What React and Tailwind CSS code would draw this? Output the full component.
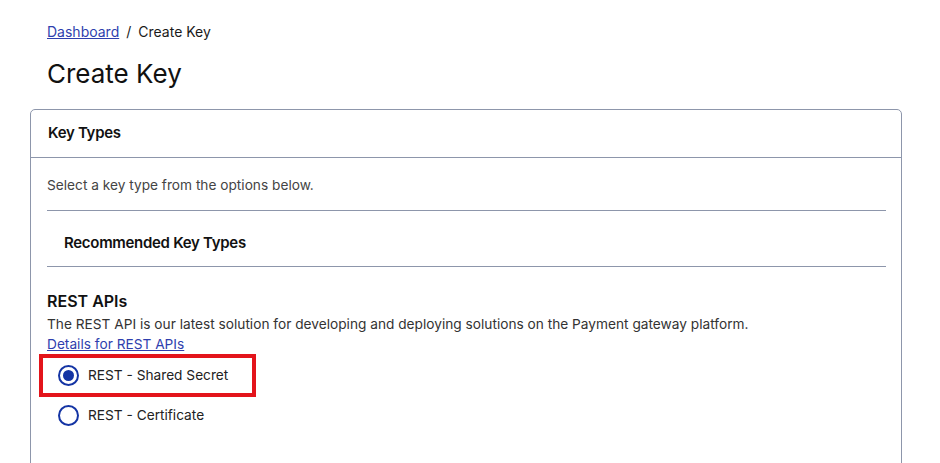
import React, { useState } from "react";

const RadioOption = ({ label, checked, onSelect }) => (
  <label className="flex items-center gap-[9px] cursor-pointer" onClick={onSelect}>
    <span className="w-[21px] h-[21px] rounded-full border-2 border-[#1434a4] flex items-center justify-center bg-white">
      {checked && <span className="w-[11px] h-[11px] rounded-full bg-[#1434a4]" />}
    </span>
    <span className="text-[13.7px] text-[#222]">{label}</span>
  </label>
);

const App = () => {
  const [selected, setSelected] = useState("shared");

  return (
    <div className="w-[940px] h-[463px] bg-white overflow-hidden font-['Inter',sans-serif] text-[#1a1a1a]">
      {/* Breadcrumb */}
      <div className="pl-[47px] pt-[23px] text-[14px] leading-[18px] flex gap-[7px]">
        <a href="#" className="text-[#2f3fae] underline">Dashboard</a>
        <span>/</span>
        <span>Create Key</span>
      </div>

      <h1 className="pl-[47px] mt-[17px] text-[26px] leading-[32px] font-normal text-[#111]">Create Key</h1>

      {/* Card */}
      <div className="ml-[30px] mt-[19px] w-[872px] border border-[#8d96ab] rounded-[5px] h-[400px]">
        <div className="px-[17px] h-[48px] flex items-center border-b border-[#8d96ab]">
          <span className="text-[15px] font-semibold tracking-[-0.3px] text-[#111]">Key Types</span>
        </div>

        <div className="pl-[16px] pr-[15px]">
          <p className="pt-[18px] pb-[16px] text-[13.7px] leading-[18px] text-[#444]">Select a key type from the options below.</p>
          <div className="border-t border-[#8d96ab]" />
          <div className="pt-[22px] pb-[14px] pl-[17px] leading-[18px]">
            <span className="text-[15px] font-semibold tracking-[-0.3px] text-[#111]">Recommended Key Types</span>
          </div>
          <div className="border-t border-[#8d96ab]" />

          <div className="pt-[23px]">
            <h2 className="text-[16px] font-semibold leading-[22px] text-[#111]">REST APIs</h2>
            <p className="text-[13.7px] leading-[20px] mt-[2px] text-[#333]">
              The REST API is our latest solution for developing and deploying solutions on the Payment gateway platform.
            </p>
            <a href="#" className="block w-fit text-[13.7px] leading-[20px] text-[#2f3fae] underline">Details for REST APIs</a>

            <div className="-ml-[8px] w-[217px] h-[43px] border-4 border-[#e3141b] flex items-center pl-[15px]">
              <RadioOption label="REST - Shared Secret" checked={selected === "shared"} onSelect={() => setSelected("shared")} />
            </div>
            <div className="mt-[8px] pl-[11px]">
              <RadioOption label="REST - Certificate" checked={selected === "cert"} onSelect={() => setSelected("cert")} />
            </div>
          </div>
        </div>
      </div>
    </div>
  );
};

export default App;
